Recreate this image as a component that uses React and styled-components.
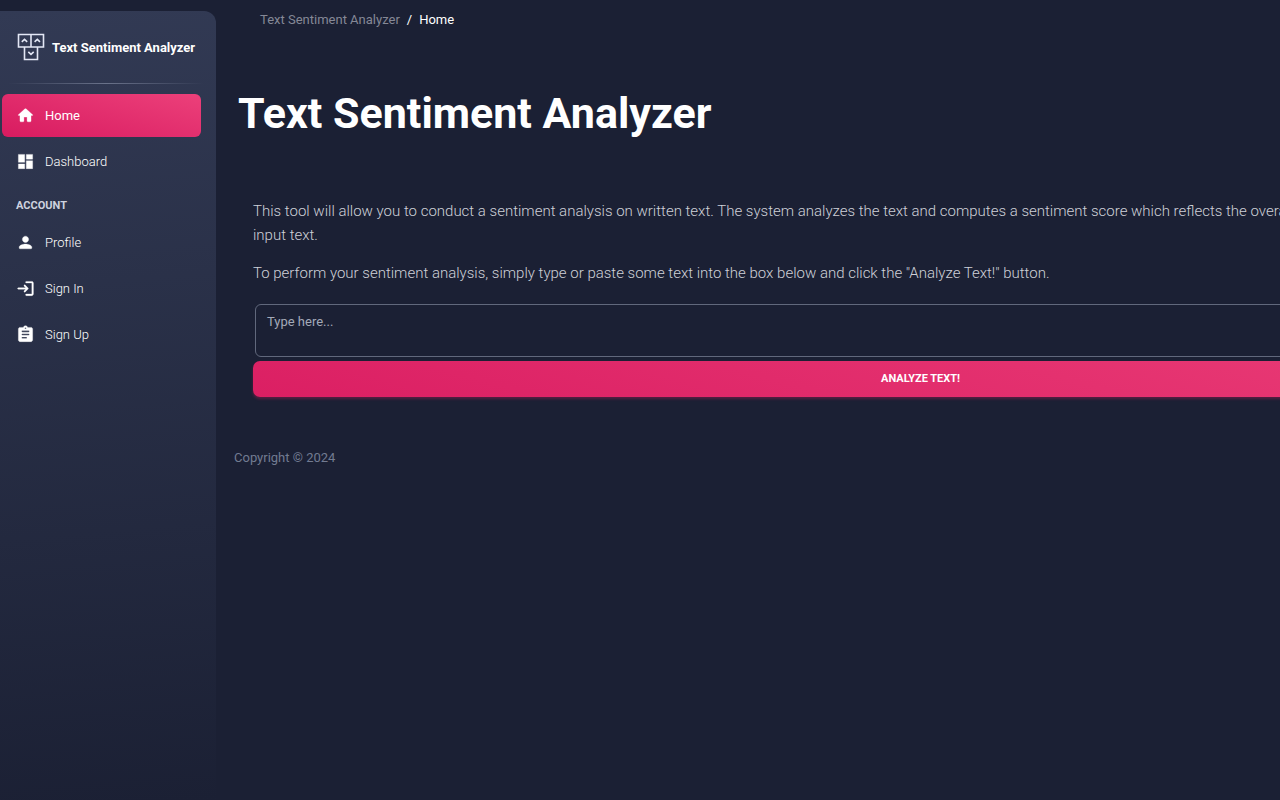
import React from "react";
import styled, { createGlobalStyle, css } from "styled-components";

const GlobalStyle = createGlobalStyle`
  * { box-sizing: border-box; }
  body {
    margin: 0;
    background: #1b2034;
    color: #fff;
    font-family: Roboto, "Liberation Sans", sans-serif;
    overflow-x: hidden;
  }
`;

const Page = styled.div`
  display: flex;
  min-height: 100vh;
`;

const Sidebar = styled.aside`
  flex: 0 0 216px;
  margin-top: 11px;
  border-radius: 0 12px 0 0;
  background: linear-gradient(175deg, #323a54, #1b2034);
`;

const Brand = styled.a`
  display: flex;
  align-items: center;
  gap: 7px;
  height: 72px;
  padding-left: 17px;
  color: #fff;
  font-size: 13px;
  font-weight: 700;
  text-decoration: none;
  white-space: nowrap;
`;

const Divider = styled.hr`
  height: 1px;
  margin: 0 12px 10px 8px;
  border: 0;
  background: linear-gradient(90deg, transparent, #6a728a, transparent);
`;

const NavList = styled.nav`
  display: flex;
  flex-direction: column;
  gap: 3px;
  padding: 0 15px 0 2px;
`;

const NavLink = styled.a`
  display: flex;
  align-items: center;
  gap: 10px;
  height: 43px;
  padding-left: 14px;
  border-radius: 6px;
  color: #fff;
  font-size: 13px;
  line-height: 20px;
  font-weight: ${(p) => (p.$active ? 400 : 300)};
  text-decoration: none;
  ${(p) =>
    p.$active &&
    css`
      background: linear-gradient(15deg, #d81b60, #ec407a);
    `}
`;

const SectionTitle = styled.h2`
  margin: 15px 0 4px;
  padding-left: 14px;
  color: #ced2df;
  font-size: 11px;
  line-height: 16px;
  font-weight: 700;
`;

const Main = styled.main`
  flex: 1;
  min-width: 0;
  overflow: hidden;
`;

const Crumbs = styled.nav`
  display: flex;
  gap: 7px;
  padding: 10px 0 0 44px;
  font-size: 13px;
  line-height: 20px;
`;

const CrumbLink = styled.a`
  color: #858896;
  text-decoration: none;
`;

const Title = styled.h1`
  margin: 53px 0 0 22px;
  font-size: 43px;
  line-height: 60px;
  font-weight: 700;
`;

const Panel = styled.form`
  display: flex;
  flex-direction: column;
  width: 130%;
`;

const PanelArea = styled.div`
  padding: 56px 0 0 37px;
`;

const Copy = styled.p`
  margin: 0 0 14px;
  color: #ced0d8;
  font-size: 15px;
  line-height: 24px;
  font-weight: 300;
`;

const TextBox = styled.textarea`
  height: 53px;
  margin: 5px 2px 4px;
  padding: 8px 11px;
  border: 1px solid #61687c;
  border-radius: 6px;
  background: transparent;
  color: #fff;
  font: 400 13px/17px Roboto, sans-serif;
  resize: none;
  &::placeholder { color: #a3a9b8; opacity: 1; }
`;

const SubmitButton = styled.button`
  height: 36px;
  border: 0;
  border-radius: 7px;
  background: linear-gradient(15deg, #db1f63, #ea3d77);
  box-shadow: 0 2px 3px rgba(233, 30, 99, 0.3);
  color: #fff;
  font: 700 11px/16px Roboto, sans-serif;
  text-transform: uppercase;
`;

const Footer = styled.footer`
  padding: 51px 0 20px 18px;
  color: #727b91;
  font-size: 13px;
  line-height: 20px;
`;

const Glyph = ({ d }) => (
  <svg width="19" height="19" viewBox="0 0 24 24" fill="#fff" stroke="#fff" strokeWidth="0.4" aria-hidden="true">
    <path d={d} />
  </svg>
);

const icons = {
  home: "M10 19v-5h4v5c0 .55.45 1 1 1h3c.55 0 1-.45 1-1v-7h1.7c.46 0 .68-.57.33-.87L12.67 3.6c-.38-.34-.96-.34-1.34 0l-8.36 7.53c-.34.3-.13.87.33.87H5v7c0 .55.45 1 1 1h3c.55 0 1-.45 1-1z",
  dashboard:
    "M3 13h8V3H3v10zm0 8h8v-6H3v6zm10 0h8V11h-8v10zm0-18v6h8V3h-8z",
  person:
    "M12 12c2.21 0 4-1.79 4-4s-1.79-4-4-4-4 1.79-4 4 1.79 4 4 4zm0 2c-2.67 0-8 1.34-8 4v1c0 .55.45 1 1 1h14c.55 0 1-.45 1-1v-1c0-2.66-5.33-4-8-4z",
  login:
    "M10.3 7.7c-.39.39-.39 1.01 0 1.4l1.9 1.9H3c-.55 0-1 .45-1 1s.45 1 1 1h9.2l-1.9 1.9c-.39.39-.39 1.01 0 1.4.39.39 1.01.39 1.4 0l3.59-3.59c.39-.39.39-1.02 0-1.41L11.7 7.7c-.39-.39-1.01-.39-1.4 0zM20 19h-7c-.55 0-1 .45-1 1s.45 1 1 1h7c1.1 0 2-.9 2-2V5c0-1.1-.9-2-2-2h-7c-.55 0-1 .45-1 1s.45 1 1 1h7v14z",
  assignment:
    "M19 3h-4.18C14.4 1.84 13.3 1 12 1s-2.4.84-2.82 2H5c-1.1 0-2 .9-2 2v14c0 1.1.9 2 2 2h14c1.1 0 2-.9 2-2V5c0-1.1-.9-2-2-2zm-7 0c.55 0 1 .45 1 1s-.45 1-1 1-1-.45-1-1 .45-1 1-1zm1 14H8c-.55 0-1-.45-1-1s.45-1 1-1h5c.55 0 1 .45 1 1s-.45 1-1 1zm3-4H8c-.55 0-1-.45-1-1s.45-1 1-1h8c.55 0 1 .45 1 1s-.45 1-1 1zm0-4H8c-.55 0-1-.45-1-1s.45-1 1-1h8c.55 0 1 .45 1 1s-.45 1-1 1z",
};

const Logo = () => (
  <svg width="28" height="28" viewBox="0 0 28 28" fill="none" stroke="#e3e7f5" strokeWidth="1.6" aria-hidden="true">
    <path d="M1.5 1.5h25v12.5h-25zM14 1.5V14M7.5 14v12.5h13V14" />
    <path d="M4.8 8.8 7.5 6.3l2.7 2.5M17.6 8.8l2.7-2.5L23 8.8M11.3 18.8l2.7 2.5 2.7-2.5" />
  </svg>
);

const NavItem = ({ icon, label, active }) => (
  <NavLink href="#" $active={active} aria-current={active ? "page" : undefined}>
    <Glyph d={icons[icon]} />
    {label}
  </NavLink>
);

export default function App() {
  return (
    <>
      <GlobalStyle />
      <Page>
        <Sidebar>
          <Brand href="#">
            <Logo />
            Text Sentiment Analyzer
          </Brand>
          <Divider />
          <NavList aria-label="Main">
            <NavItem icon="home" label="Home" active />
            <NavItem icon="dashboard" label="Dashboard" />
          </NavList>
          <NavList aria-label="Account">
            <SectionTitle>ACCOUNT</SectionTitle>
            <NavItem icon="person" label="Profile" />
            <NavItem icon="login" label="Sign In" />
            <NavItem icon="assignment" label="Sign Up" />
          </NavList>
        </Sidebar>
        <Main>
          <Crumbs aria-label="Breadcrumb">
            <CrumbLink href="#">Text Sentiment Analyzer</CrumbLink>
            <span>/</span>
            <span>Home</span>
          </Crumbs>
          <Title>Text Sentiment Analyzer</Title>
          <PanelArea>
            <Panel onSubmit={(e) => e.preventDefault()}>
              <Copy>
                This tool will allow you to conduct a sentiment analysis on written text. The system analyzes the
                text and computes a sentiment score which reflects the overall sentiment (positive or negative) of
                the input&nbsp;text.
              </Copy>
              <Copy>
                To perform your sentiment analysis, simply type or paste some text into the box below and click the
                "Analyze Text!" button.
              </Copy>
              <TextBox aria-label="Text to analyze" placeholder="Type here..." />
              <SubmitButton type="submit">Analyze Text!</SubmitButton>
            </Panel>
          </PanelArea>
          <Footer>Copyright © 2024</Footer>
        </Main>
      </Page>
    </>
  );
}
